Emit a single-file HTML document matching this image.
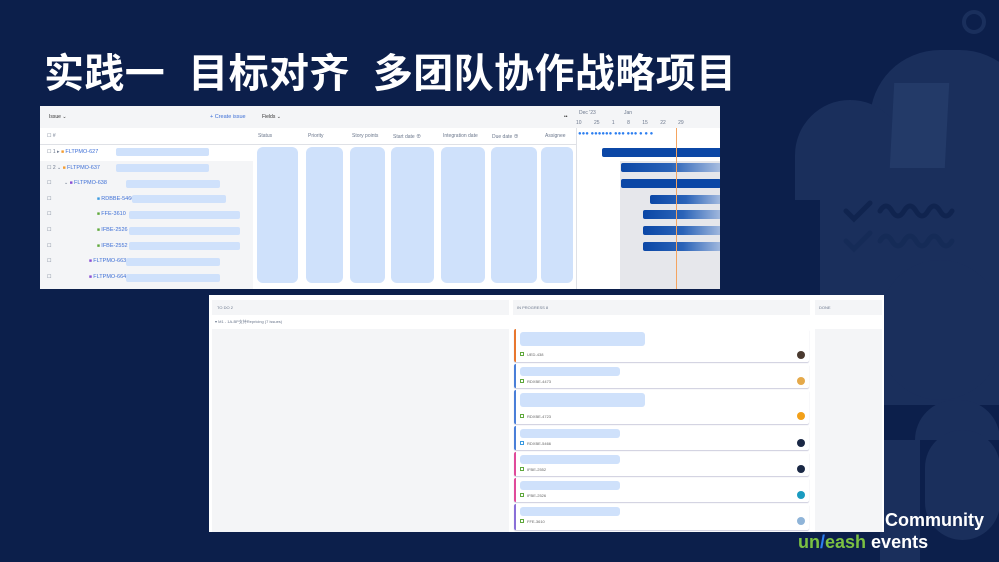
<!DOCTYPE html>
<html><head><meta charset="utf-8"><style>
*{margin:0;padding:0;box-sizing:border-box}
body{width:999px;height:562px;overflow:hidden;background:#0c1f4b;font-family:"Liberation Sans","Noto Sans CJK SC",sans-serif;position:relative}
.a{position:absolute}
.bg{background:#1a2f5c}
.pill{position:absolute;background:#cfe1fb;border-radius:6px}
.t{position:absolute;font-size:5px;color:#6b778c;white-space:nowrap}
.lk{color:#3d6fd6;font-size:5.5px}
.card{position:absolute;left:514px;width:295px;background:#fff;border-radius:2px;box-shadow:0 1px 1px #ccd}
.card .b{position:absolute;left:4px;top:3px;height:14px;background:#cfe1fb;border-radius:3px}
.card .ic{position:absolute;left:4px;width:4px;height:4px;border:1px solid #5fa83c}
.card .k{position:absolute;left:11px;font-size:4px;color:#666}
.card .av{position:absolute;right:4px;width:8px;height:8px;border-radius:50%}
.bar{position:absolute;height:9px;border-radius:2px;background:linear-gradient(90deg,#0b47a6,#2a63b8 50%,#a9bee0)}
</style></head><body>
<!-- background illustration -->
<div class="a bg" style="left:870px;top:50px;width:160px;height:130px;border-radius:70px 70px 0 0"></div>
<div class="a bg" style="left:795px;top:100px;width:110px;height:100px;border-radius:55px 55px 0 0"></div>
<div class="a bg" style="left:820px;top:165px;width:180px;height:240px"></div>
<div class="a" style="left:892px;top:83px;width:55px;height:85px;background:#233a68;transform:skewX(-3deg)"></div>
<div class="a bg" style="left:880px;top:260px;width:120px;height:140px;border-radius:60px"></div>
<div class="a bg" style="left:915px;top:400px;width:85px;height:40px;border-radius:40px 40px 0 0"></div>
<div class="a bg" style="left:925px;top:430px;width:75px;height:110px;border-radius:40px"></div>
<div class="a bg" style="left:880px;top:440px;width:40px;height:122px"></div>
<div class="a" style="left:962px;top:10px;width:24px;height:24px;border-radius:50%;border:4px solid #1a2f5c"></div>
<svg class="a" style="left:840px;top:195px" width="160" height="60" viewBox="0 0 160 60" fill="none" stroke-width="5" stroke-linecap="round">
 <path d="M6 16l8 8 16-16" stroke="#10244f"/>
 <path d="M40 16q6-10 12 0t12 0 12 0 12 0 12 0 12 0" stroke="#10244f"/>
 <path d="M6 46l8 8 16-16" stroke="#152b57"/>
 <path d="M40 46q6-10 12 0t12 0 12 0 12 0 12 0 12 0" stroke="#152b57"/>
</svg>
<div class="a" style="left:44px;top:41px;font-size:40px;font-weight:bold;color:#fff;letter-spacing:0.4px;white-space:pre">实践一  目标对齐  多团队协作战略项目</div>

<!-- top panel -->
<div class="a" style="left:40px;top:106px;width:680px;height:183px;background:#fff;overflow:hidden">
 <div class="a" style="left:0;top:0;width:680px;height:22px;background:#f4f5f7"></div>
 <div class="a" style="left:0;top:55px;width:213px;height:130px;background:#f4f5f7"></div>
 <div class="a" style="left:0;top:38px;width:536px;height:1px;background:#dfe1e6"></div>
 <div class="a" style="left:536px;top:22px;width:1px;height:161px;background:#dfe1e6"></div>
 <div class="a" style="left:580px;top:55px;width:100px;height:130px;background:#e6e7eb"></div>
 <div class="t" style="left:9px;top:8px;color:#333">Issue ⌄</div>
 <div class="t lk" style="left:170px;top:8px">+ Create issue</div>
 <div class="t" style="left:222px;top:8px;color:#333">Fields ⌄</div>
 <div class="t" style="left:524px;top:8px;color:#333">••</div>
 <div class="t" style="left:539px;top:4px">Dec '23</div><div class="t" style="left:584px;top:4px">Jan</div>
 <div class="t" style="left:536px;top:14px;word-spacing:11px">10 25 1 8 15 22 29</div>
 <div class="t" style="left:7px;top:27px">☐ #</div>
 <div class="t" style="left:218px;top:27px">Status</div><div class="t" style="left:268px;top:27px">Priority</div>
 <div class="t" style="left:312px;top:27px">Story points</div><div class="t" style="left:353px;top:27px">Start date ⊕</div>
 <div class="t" style="left:403px;top:27px">Integration date</div><div class="t" style="left:452px;top:27px">Due date ⊕</div>
 <div class="t" style="left:505px;top:27px">Assignee</div>
 <div class="t" style="left:538px;top:25px;color:#2d7ff0;font-size:6px;font-weight:bold">●●● ●●●●●● ●●● ●●● ● ● ●</div>
 <div class="t" style="left:7px;top:43px">☐ 1 ▸ <span style="color:#f39c32">■</span> <span class="lk">FLTPMO-627</span></div>
 <div class="t" style="left:7px;top:59px">☐ 2 ⌄ <span style="color:#f39c32">■</span> <span class="lk">FLTPMO-637</span></div>
 <div class="t" style="left:7px;top:74px">☐ &nbsp; &nbsp; &nbsp; &nbsp; ⌄ <span style="color:#8a4fd4">■</span> <span class="lk">FLTPMO-638</span></div>
 <div class="t" style="left:7px;top:90px">☐ <span style="margin-left:44px;color:#3b9ae0">■</span> <span class="lk">RDBBE-5466</span></div>
 <div class="t" style="left:7px;top:105px">☐ <span style="margin-left:44px;color:#5fa83c">■</span> <span class="lk">FFE-3610</span></div>
 <div class="t" style="left:7px;top:121px">☐ <span style="margin-left:44px;color:#5fa83c">■</span> <span class="lk">IFBE-2526</span></div>
 <div class="t" style="left:7px;top:137px">☐ <span style="margin-left:44px;color:#5fa83c">■</span> <span class="lk">IFBE-2552</span></div>
 <div class="t" style="left:7px;top:152px">☐ <span style="margin-left:36px;color:#8a4fd4">■</span> <span class="lk">FLTPMO-663</span></div>
 <div class="t" style="left:7px;top:168px">☐ <span style="margin-left:36px;color:#8a4fd4">■</span> <span class="lk">FLTPMO-664</span></div>
 <div class="pill" style="left:76px;top:42px;width:93px;height:8px;border-radius:2px"></div>
 <div class="pill" style="left:76px;top:58px;width:93px;height:8px;border-radius:2px"></div>
 <div class="pill" style="left:86px;top:74px;width:94px;height:8px;border-radius:2px"></div>
 <div class="pill" style="left:92px;top:89px;width:94px;height:8px;border-radius:2px"></div>
 <div class="pill" style="left:89px;top:105px;width:111px;height:8px;border-radius:2px"></div>
 <div class="pill" style="left:89px;top:121px;width:111px;height:8px;border-radius:2px"></div>
 <div class="pill" style="left:89px;top:136px;width:111px;height:8px;border-radius:2px"></div>
 <div class="pill" style="left:86px;top:152px;width:94px;height:8px;border-radius:2px"></div>
 <div class="pill" style="left:86px;top:168px;width:94px;height:8px;border-radius:2px"></div>
 <div class="pill" style="left:217px;top:41px;width:41px;height:136px"></div>
 <div class="pill" style="left:266px;top:41px;width:37px;height:136px"></div>
 <div class="pill" style="left:310px;top:41px;width:35px;height:136px"></div>
 <div class="pill" style="left:351px;top:41px;width:43px;height:136px"></div>
 <div class="pill" style="left:401px;top:41px;width:44px;height:136px"></div>
 <div class="pill" style="left:451px;top:41px;width:46px;height:136px"></div>
 <div class="pill" style="left:501px;top:41px;width:32px;height:136px"></div>
 <div class="bar" style="left:562px;top:42px;width:120px;background:#0b47a6"></div>
 <div class="bar" style="left:581px;top:57px;width:100px"></div>
 <div class="bar" style="left:581px;top:73px;width:100px;background:#0b47a6"></div>
 <div class="bar" style="left:610px;top:89px;width:72px"></div>
 <div class="bar" style="left:603px;top:104px;width:80px"></div>
 <div class="bar" style="left:603px;top:120px;width:80px"></div>
 <div class="bar" style="left:603px;top:136px;width:80px"></div>
 <div class="a" style="left:636px;top:22px;width:1px;height:161px;background:#f4a460"></div>
</div>

<!-- bottom board -->
<div class="a" style="left:209px;top:295px;width:675px;height:237px;background:#fff"></div>
<div class="a" style="left:212px;top:300px;width:297px;height:15px;background:#f4f5f7"></div>
<div class="a" style="left:513px;top:300px;width:297px;height:15px;background:#f4f5f7"></div>
<div class="a" style="left:815px;top:300px;width:67px;height:15px;background:#f4f5f7"></div>
<div class="a" style="left:212px;top:329px;width:297px;height:203px;background:#f4f5f7"></div>
<div class="a" style="left:815px;top:329px;width:67px;height:203px;background:#f4f5f7"></div>
<div class="t" style="left:217px;top:305px;font-size:4px">TO DO 2</div>
<div class="t" style="left:517px;top:305px;font-size:4px">IN PROGRESS 8</div>
<div class="t" style="left:819px;top:305px;font-size:4px">DONE</div>
<div class="t" style="left:215px;top:319px;font-size:4px">▾ M1 - 1A-BP支持Repricing (7 issues)</div>
<div class="card" style="top:329px;height:33px;border-left:2px solid #e8772e"><div class="b" style="width:125px"></div><div class="ic" style="top:23px"></div><div class="k" style="top:23px">UED-438</div><div class="av" style="top:22px;background:#4a3a30"></div></div>
<div class="card" style="top:364px;height:24px;border-left:2px solid #4a7fd8"><div class="b" style="width:100px;height:9px"></div><div class="ic" style="top:15px"></div><div class="k" style="top:15px">RDXBE-4473</div><div class="av" style="top:13px;background:#e5a94a"></div></div>
<div class="card" style="top:390px;height:34px;border-left:2px solid #4a7fd8"><div class="b" style="width:125px"></div><div class="ic" style="top:24px"></div><div class="k" style="top:24px">RDXBE-4723</div><div class="av" style="top:22px;background:#f2a019"></div></div>
<div class="card" style="top:426px;height:24px;border-left:2px solid #4a7fd8"><div class="b" style="width:100px;height:9px"></div><div class="ic" style="top:15px;border-color:#3b9ae0"></div><div class="k" style="top:15px">RDXBE-5466</div><div class="av" style="top:13px;background:#1a2845"></div></div>
<div class="card" style="top:452px;height:24px;border-left:2px solid #e04a9a"><div class="b" style="width:100px;height:9px"></div><div class="ic" style="top:15px"></div><div class="k" style="top:15px">IFBE-2552</div><div class="av" style="top:13px;background:#1a2845"></div></div>
<div class="card" style="top:478px;height:24px;border-left:2px solid #e04a9a"><div class="b" style="width:100px;height:9px"></div><div class="ic" style="top:15px"></div><div class="k" style="top:15px">IFBE-2526</div><div class="av" style="top:13px;background:#1a9bc0"></div></div>
<div class="card" style="top:504px;height:26px;border-left:2px solid #8a6fd8"><div class="b" style="width:100px;height:9px"></div><div class="ic" style="top:15px"></div><div class="k" style="top:15px">FFE-3610</div><div class="av" style="top:13px;background:#8fb4d8"></div></div>

<div class="a" style="left:885px;top:510px;font-size:18px;font-weight:bold;color:#fff">Community</div>
<div class="a" style="left:798px;top:532px;font-size:18px;font-weight:bold;color:#fff"><span style="color:#7bc142">un<span style="color:#2d7ff0">/</span>eash</span> events</div>
</body></html>
